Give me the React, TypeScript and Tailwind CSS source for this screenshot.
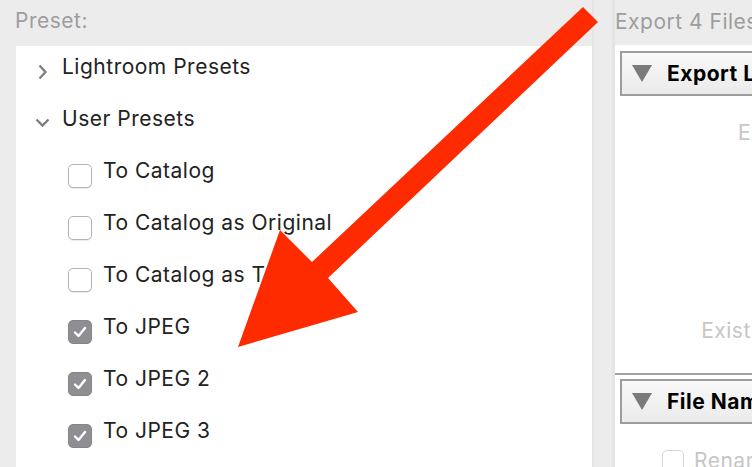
const rows = [
  { label: 'To Catalog', checked: false },
  { label: 'To Catalog as Original', checked: false },
  { label: 'To Catalog as TIFF', checked: false },
  { label: 'To JPEG', checked: true },
  { label: 'To JPEG 2', checked: true },
  { label: 'To JPEG 3', checked: true },
]

const Checkbox = ({ checked }: { checked: boolean }) =>
  checked ? (
    <div className="w-[24px] h-[24px] rounded-[5px] bg-[#8e8e93] border border-[#86868a] flex items-center justify-center translate-y-[5px] shrink-0">
      <svg width="16" height="16" viewBox="0 0 16 16">
        <path d="M3 8.5 L6.5 12 L13 4" fill="none" stroke="white" strokeWidth="2.4" strokeLinecap="round" strokeLinejoin="round" />
      </svg>
    </div>
  ) : (
    <div className="w-[24px] h-[24px] rounded-[5px] bg-white border border-[#b4b4b4] shadow-[0_1px_1px_rgba(0,0,0,0.08)] translate-y-[5px] shrink-0" />
  )

const SectionHeader = ({ title }: { title: string }) => (
  <div className="ml-[5px] h-[45px] border-2 border-[#9c9c9c] bg-gradient-to-b from-[#f8f8f8] to-[#ebebeb] flex items-center pl-[10px] whitespace-nowrap">
    <svg width="20" height="17" viewBox="0 0 20 17" className="shrink-0">
      <polygon points="0,0 20,0 10,17" fill="#7a7a7a" />
    </svg>
    <span className="ml-[15px] text-[21px] font-bold text-black">{title}</span>
  </div>
)

export default function App() {
  return (
    <div className="relative w-[752px] h-[467px] overflow-hidden bg-[#ececec] flex font-['Inter',sans-serif] tracking-[0.5px]">
      {/* preset list */}
      <div className="w-[592px] shrink-0 pl-[16px] flex flex-col">
        <div className="h-[46px] shrink-0 pt-[9px] -ml-px text-[21px] leading-[24px] text-[#9d9d9d]">Preset:</div>
        <div className="flex-1 bg-white">
          <div className="-mt-[5px] text-[21px] leading-[52px] text-[#222]">
            <div className="flex items-center h-[52px]">
              <svg width="16" height="16" viewBox="0 0 16 16" className="ml-[19px] translate-y-[5px] shrink-0">
                <path d="M4.5 1.5 L10.5 8 L4.5 14.5" fill="none" stroke="#7d7d7d" strokeWidth="2.3" />
              </svg>
              <span className="ml-[11px]">Lightroom Presets</span>
            </div>
            <div className="flex items-center h-[52px]">
              <svg width="16" height="16" viewBox="0 0 16 16" className="ml-[19px] translate-y-[4px] shrink-0">
                <path d="M1.5 4.5 L7.5 10.5 L13.5 4.5" fill="none" stroke="#7d7d7d" strokeWidth="2.3" />
              </svg>
              <span className="ml-[11px]">User Presets</span>
            </div>
            {rows.map((r) => (
              <div key={r.label} className="flex items-center h-[52px] pl-[52px] whitespace-nowrap">
                <Checkbox checked={r.checked} />
                <span className="ml-[11px]">{r.label}</span>
              </div>
            ))}
          </div>
        </div>
      </div>

      <div className="w-[23px] shrink-0 border-l-2 border-r-[3px] border-[#e4e4e4]" />

      {/* export settings */}
      <div className="w-[420px] shrink-0 flex flex-col">
        <div className="h-[45px] shrink-0 pt-[10px] text-[21px] leading-[24px] text-[#9d9d9d] whitespace-nowrap">Export 4 Files:</div>
        <div className="flex-1 bg-white flex flex-col">
          <div className="pt-[6px] shrink-0">
            <SectionHeader title="Export Location" />
          </div>
          <div className="h-[277px] shrink-0 flex flex-col text-[21px] leading-[24px] text-[#c6c6c6] whitespace-nowrap">
            <div className="w-[229px] text-right mt-[25px]">Export To:</div>
            <div className="w-[229px] text-right mt-[174px]">Existing Files:</div>
          </div>
          <div className="h-[2px] shrink-0 bg-[#a0a0a0]" />
          <div className="pt-[4px] shrink-0">
            <SectionHeader title="File Naming" />
          </div>
          <div className="flex items-center shrink-0 mt-[25px] ml-[47px] text-[21px] leading-[24px] text-[#c6c6c6] whitespace-nowrap">
            <div className="w-[22px] h-[22px] rounded-[5px] border border-[#d6d6d6] bg-white shrink-0" />
            <span className="ml-[10px]">Rename To:</span>
          </div>
        </div>
      </div>

      {/* callout arrow */}
      <svg className="absolute inset-0 pointer-events-none" width="752" height="467" viewBox="0 0 752 467">
        <polygon points="583,7 598,22 328,278 358,312 238,347 280,230 312,262" fill="#fe2a00" />
      </svg>
    </div>
  )
}
